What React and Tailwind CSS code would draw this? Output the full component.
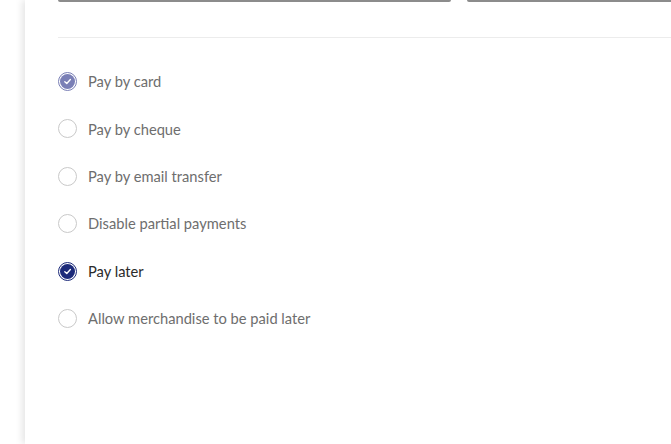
import React from "react";

function Radio({ checked, tone, label, dark }) {
  const color = tone === "muted" ? "#7a7fb6" : "#1c2a7a";
  return (
    <div className="flex items-center h-[19px]">
      {checked ? (
        <span
          className="flex items-center justify-center w-[19px] h-[19px] rounded-full border"
          style={{ borderColor: color }}
        >
          <span
            className="flex items-center justify-center w-[15px] h-[15px] rounded-full"
            style={{ backgroundColor: color }}
          >
            <svg width="9" height="9" viewBox="0 0 10 10" fill="none">
              <path d="M2 5.2 L4.2 7.3 L8.2 2.8" stroke="white" strokeWidth="1.5" strokeLinecap="round" strokeLinejoin="round" />
            </svg>
          </span>
        </span>
      ) : (
        <span className="w-[19px] h-[19px] rounded-full border border-[#c9c9c9] bg-white" />
      )}
      <span
        className={`ml-[11px] text-[14.7px] leading-none ${dark ? "text-[#2b2b2b]" : "text-[#6e6e6e]"}`}
      >
        {label}
      </span>
    </div>
  );
}

export default function App() {
  const items = [
    { label: "Pay by card", checked: true, tone: "muted" },
    { label: "Pay by cheque" },
    { label: "Pay by email transfer" },
    { label: "Disable partial payments" },
    { label: "Pay later", checked: true, tone: "dark", dark: true },
    { label: "Allow merchandise to be paid later" },
  ];
  return (
    <div
      className="w-[671px] h-[444px] bg-white flex overflow-hidden"
      style={{ fontFamily: "Lato, 'Noto Sans', sans-serif" }}
    >
      <div className="w-[25px] shrink-0 bg-white" />
      <div className="flex-1 bg-white shadow-[-3px_0_7px_rgba(0,0,0,0.10)] pl-[33px] flex flex-col">
        <div className="flex gap-[16px] h-[2px]">
          <div className="w-[393px] h-[2px] bg-[#8c8c8c] rounded-b-full" />
          <div className="flex-1 h-[2px] bg-[#8c8c8c] rounded-bl-full" />
        </div>
        <div className="mt-[35px] h-px bg-[#ececec]" />
        <div className="mt-[34px] flex flex-col gap-[28.4px]">
          {items.map((it) => (
            <Radio key={it.label} {...it} />
          ))}
        </div>
      </div>
    </div>
  );
}
